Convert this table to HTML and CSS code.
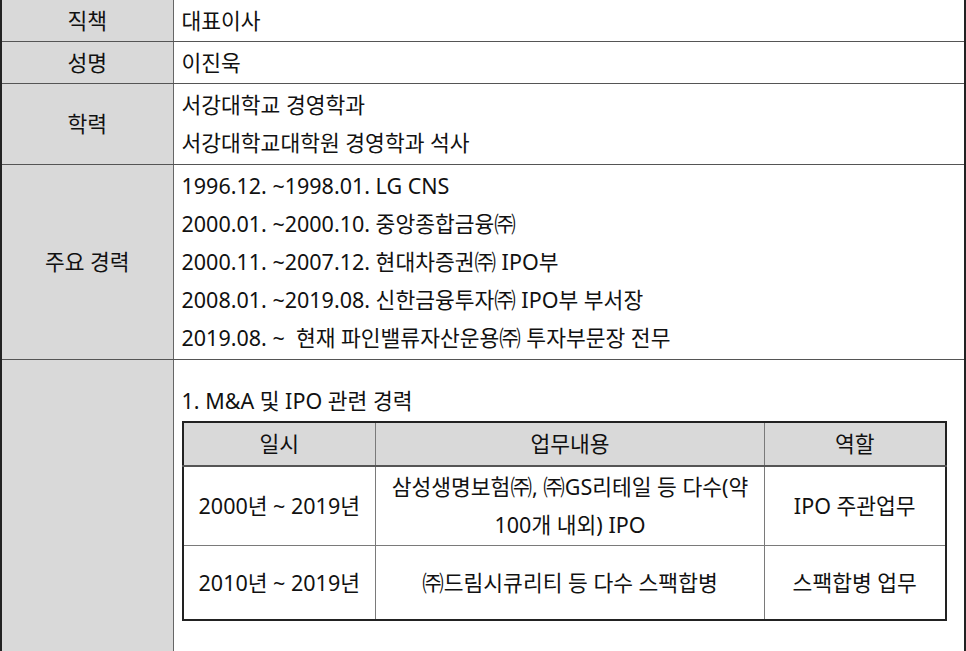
FILE: index.html
```html
<!DOCTYPE html>
<html lang="ko">
<head>
<meta charset="utf-8">
<title>경력</title>
<link rel="stylesheet" href="styles.css">
</head>
<body>
<table class="profile">
  <colgroup><col class="col-label"><col class="col-value"></colgroup>
  <tr class="r-single">
    <th>직책</th>
    <td>대표이사</td>
  </tr>
  <tr class="r-single">
    <th>성명</th>
    <td>이진욱</td>
  </tr>
  <tr>
    <th>학력</th>
    <td class="multi">서강대학교 경영학과<br>서강대학교대학원 경영학과 석사</td>
  </tr>
  <tr>
    <th>주요 경력</th>
    <td class="multi">1996.12. ~1998.01. LG CNS<br>2000.01. ~2000.10. 중앙종합금융㈜<br>2000.11. ~2007.12. 현대차증권㈜ IPO부<br>2008.01. ~2019.08. 신한금융투자㈜ IPO부 부서장<br>2019.08. ~&nbsp; 현재 파인밸류자산운용㈜ 투자부문장 전무</td>
  </tr>
  <tr>
    <th></th>
    <td class="career">
      <p class="section-title">1. M&amp;A 및 IPO 관련 경력</p>
      <table class="history">
        <colgroup><col class="h1"><col class="h2"><col class="h3"></colgroup>
        <tr class="head">
          <th>일시</th><th>업무내용</th><th>역할</th>
        </tr>
        <tr class="tall">
          <td>2000년 ~ 2019년</td>
          <td>삼성생명보험㈜, ㈜GS리테일 등 다수(약<br>100개 내외) IPO</td>
          <td>IPO 주관업무</td>
        </tr>
        <tr class="mid">
          <td>2010년 ~ 2019년</td>
          <td>㈜드림시큐리티 등 다수 스팩합병</td>
          <td>스팩합병 업무</td>
        </tr>
      </table>
    </td>
  </tr>
</table>
</body>
</html>
```
FILE: styles.css
```css
html, body {
  margin: 0;
  padding: 0;
  background: #ffffff;
}
body {
  font-family: "Noto Sans", "Noto Sans CJK KR", sans-serif;
  font-size: 21.5px;
  font-weight: normal;
  color: #111111;
}
.profile {
  width: 966px;
  border-collapse: collapse;
  table-layout: fixed;
  border-left: 2px solid #222;
  border-right: 2px solid #222;
}
.col-label { width: 172px; }
.profile > tbody > tr > th,
.profile > tbody > tr > td {
  border-top: 1px solid #555;
  border-bottom: 1px solid #555;
  padding: 0;
  line-height: 38px;
}
.profile > tbody > tr:first-child > th,
.profile > tbody > tr:first-child > td {
  border-top: none;
}
.profile > tbody > tr > th {
  background: #d9d9d9;
  font-weight: normal;
  text-align: center;
  vertical-align: middle;
  border-right: 1px solid #666;
}
.profile > tbody > tr > td {
  padding-left: 8px;
  text-align: left;
  vertical-align: top;
}
.r-single > th,
.r-single > td {
  height: 41px;
  vertical-align: middle !important;
}
.profile td.multi {
  padding-top: 2px;
  padding-bottom: 2px;
}
.profile td.career {
  padding-top: 22px;
  padding-bottom: 60px;
}
.section-title {
  margin: 0;
  line-height: 38px;
}
.history {
  width: 763px;
  border-collapse: collapse;
  table-layout: fixed;
  border: 2px solid #222;
  margin-top: 1px;
}
.h1 { width: 193px; }
.h2 { width: 389px; }
.h3 { width: 181px; }
.history th,
.history td {
  border: 1px solid #7a7a7a;
  text-align: center;
  vertical-align: middle;
  font-weight: normal;
  padding: 0;
  line-height: 38px;
}
.history .head th {
  background: #d9d9d9;
  height: 42px;
  border-bottom: 2px solid #555;
}
.history .tall td {
  height: 78px;
}
.history .mid td {
  height: 73px;
}
```
